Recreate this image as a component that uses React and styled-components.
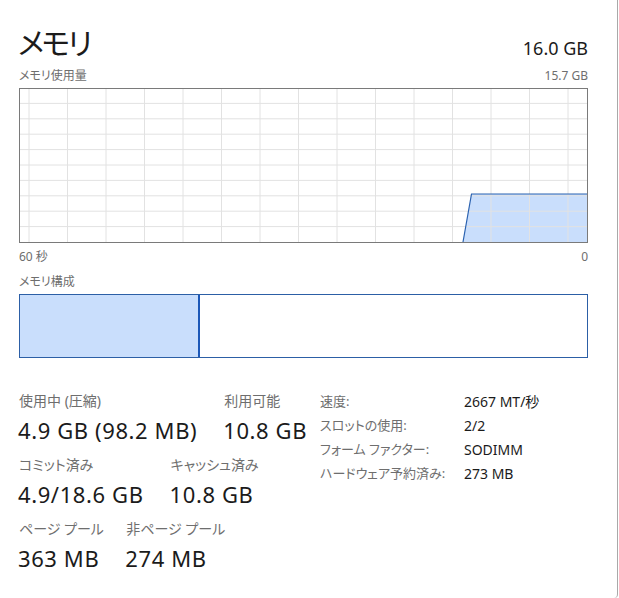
import styled, { createGlobalStyle } from "styled-components";

const GlobalStyle = createGlobalStyle`
  html, body {
    margin: 0;
    padding: 0;
    background: #ffffff;
  }
  body {
    font-family: "Noto Sans", "Noto Sans CJK JP", sans-serif;
    font-feature-settings: "palt";
    color: #1b1b1b;
  }
`;

const Panel = styled.div`
  box-sizing: border-box;
  width: 618px;
  height: 598px;
  padding: 19px 29px 0 19px;
  border-right: 1px solid #a9a9a9;
  border-bottom-right-radius: 4px;
  background: #ffffff;
`;

const Header = styled.div`
  display: flex;
  justify-content: space-between;
  align-items: flex-end;
  height: 44px;
`;

const Title = styled.h1`
  margin: 0 0 0 -1px;
  font-family: "Noto Sans CJK JP", sans-serif;
  font-size: 30px;
  font-weight: 400;
  line-height: 44px;
  letter-spacing: -2.5px;
`;

const Total = styled.div`
  font-size: 18px;
  line-height: 22px;
  margin-bottom: 4px;
`;

const CaptionRow = styled.div`
  display: flex;
  justify-content: space-between;
  font-size: 12px;
  line-height: 16px;
  color: #6e6e6e;
  margin-top: ${(p) => p.top || 0}px;
`;

const Chart = styled.svg`
  display: block;
  margin-top: 4px;
`;

const CompBar = styled.div`
  box-sizing: border-box;
  display: flex;
  width: 569px;
  height: 64px;
  margin-top: 4px;
  border: 1px solid #2c5fa6;
`;

const Segment = styled.div`
  height: 100%;
  background: #c9defc;
  border-right: 2px solid #1c58b8;
`;

const Details = styled.div`
  display: flex;
  align-items: flex-start;
  margin-top: 33px;
`;

const LeftStats = styled.div`
  width: 301px;
  display: flex;
  flex-direction: column;
  gap: 9px;
`;

const StatRow = styled.div`
  display: flex;
  gap: 27px;
`;

const Stat = styled.div`
  display: flex;
  flex-direction: column;
`;

/* label does not widen the column; the value sets it */
const StatLabel = styled.div`
  width: 0;
  white-space: nowrap;
  font-size: 14px;
  line-height: 20px;
  color: #6e6e6e;
`;

const StatValue = styled.div`
  font-size: 22px;
  line-height: 32px;
  margin-top: 3px;
  margin-left: -1px;
  letter-spacing: 0.6px;
  color: #1b1b1b;
  white-space: nowrap;
`;

const InfoTable = styled.div`
  display: grid;
  grid-template-columns: 144px auto;
  row-gap: 3px;
  line-height: 21px;
`;

const InfoLabel = styled.div`
  font-size: 13px;
  color: #6e6e6e;
`;

const InfoValue = styled.div`
  font-size: 14px;
  color: #1b1b1b;
`;

const W = 569;
const H = 154;

const MemoryChart = () => {
  const vLines = [];
  for (let x = 10; x < W; x += 38.5) vLines.push(x);
  const hLines = [];
  for (let i = 1; i < 10; i++) hLines.push(i * 15.4);
  return (
    <Chart width={W} height={H + 1} viewBox={`0 0 ${W} ${H + 1}`}>
      <rect x="0" y="0" width={W} height={H + 1} fill="#ffffff" />
      <path
        d={`M444 ${H} L452.5 106 L${W - 1} 106 L${W - 1} ${H} Z`}
        fill="#c9defc"
      />
      {vLines.map((x) => (
        <line key={"v" + x} x1={x} y1="0" x2={x} y2={H} stroke="#e2e2e2" strokeWidth="1" />
      ))}
      {hLines.map((y) => (
        <line key={"h" + y} x1="0" y1={y} x2={W} y2={y} stroke="#e2e2e2" strokeWidth="1" />
      ))}
      <path
        d={`M444 ${H} L452.5 106 L${W - 1} 106`}
        fill="none"
        stroke="#2b62b0"
        strokeWidth="1.2"
      />
      <rect x="0.5" y="0.5" width={W - 1} height={H} fill="none" stroke="#7a7a7a" strokeWidth="1" />
    </Chart>
  );
};

const App = () => {
  return (
    <>
      <GlobalStyle />
      <Panel>
        <Header>
          <Title>メモリ</Title>
          <Total>16.0 GB</Total>
        </Header>
        <CaptionRow top={5}>
          <span>メモリ使用量</span>
          <span>15.7 GB</span>
        </CaptionRow>
        <MemoryChart />
        <CaptionRow top={6}>
          <span>60 秒</span>
          <span>0</span>
        </CaptionRow>
        <CaptionRow top={9}>
          <span>メモリ構成</span>
        </CaptionRow>
        <CompBar>
          <Segment style={{ width: 178 }} />
        </CompBar>
        <Details>
          <LeftStats>
            <StatRow>
              <Stat>
                <StatLabel>使用中 (圧縮)</StatLabel>
                <StatValue>4.9 GB (98.2 MB)</StatValue>
              </Stat>
              <Stat>
                <StatLabel>利用可能</StatLabel>
                <StatValue>10.8 GB</StatValue>
              </Stat>
            </StatRow>
            <StatRow>
              <Stat>
                <StatLabel>コミット済み</StatLabel>
                <StatValue>4.9/18.6 GB</StatValue>
              </Stat>
              <Stat>
                <StatLabel>キャッシュ済み</StatLabel>
                <StatValue>10.8 GB</StatValue>
              </Stat>
            </StatRow>
            <StatRow>
              <Stat>
                <StatLabel>ページ プール</StatLabel>
                <StatValue>363 MB</StatValue>
              </Stat>
              <Stat>
                <StatLabel>非ページ プール</StatLabel>
                <StatValue>274 MB</StatValue>
              </Stat>
            </StatRow>
          </LeftStats>
          <InfoTable>
            <InfoLabel>速度:</InfoLabel>
            <InfoValue>2667 MT/秒</InfoValue>
            <InfoLabel>スロットの使用:</InfoLabel>
            <InfoValue>2/2</InfoValue>
            <InfoLabel>フォーム ファクター:</InfoLabel>
            <InfoValue>SODIMM</InfoValue>
            <InfoLabel>ハードウェア予約済み:</InfoLabel>
            <InfoValue>273 MB</InfoValue>
          </InfoTable>
        </Details>
      </Panel>
    </>
  );
};

export default App;
